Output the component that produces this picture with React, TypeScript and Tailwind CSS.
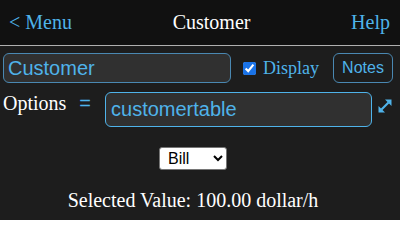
import { useState } from "react";

const serif = "font-['Liberation_Serif','Times_New_Roman',serif]";
const sans = "font-['Liberation_Sans',Arial,sans-serif]";

function ExpandIcon() {
	return (
		<svg className="h-[16px] w-[16px] text-[#4fb3ea]" viewBox="0 0 16 16">
			<path d="M4.5 11.5 L11.5 4.5" stroke="currentColor" strokeWidth="2.2" />
			<path d="M8 1.5 H14.5 V8 Z" fill="currentColor" />
			<path d="M1.5 8 V14.5 H8 Z" fill="currentColor" />
		</svg>
	);
}

export default function App() {
	const [name, setName] = useState("Customer");
	const [table, setTable] = useState("customertable");
	const [display, setDisplay] = useState(true);
	const [choice, setChoice] = useState("Bill");

	return (
		<div className={`h-[220px] w-[400px] overflow-hidden bg-[#1d1d1d] ${serif}`}>
			<header className="flex h-[46px] items-center justify-between border-b border-[#b0b0b0] bg-[#111111] px-[9px] pb-[2px] text-[20px]">
				<a className="text-[#4fb3ea]">&lt; Menu</a>
				<span className="text-white">Customer</span>
				<a className="pr-[1px] text-[#4fb3ea]">Help</a>
			</header>

			<div className="flex items-center px-[3px] pt-[7px]">
				<input
					className={`h-[30px] w-[228px] rounded-[6px] border border-[#4a88b2] bg-[#303030] pl-[4px] text-[20px] text-[#4fb3ea] outline-none ${sans}`}
					onChange={(e) => setName(e.target.value)}
					value={name}
				/>
				<label className="ml-[12px] flex items-center text-[18px] text-[#4fb3ea]">
					<input
						checked={display}
						className="h-[13px] w-[13px] accent-[#1a73e8]"
						onChange={() => setDisplay(!display)}
						type="checkbox"
					/>
					<span className="ml-[7px]">Display</span>
				</label>
				<button
					className={`ml-auto mr-[4px] h-[30px] w-[60px] rounded-[6px] border border-[#4a88b2] text-[16px] text-[#4fb3ea] ${sans}`}
					type="button"
				>
					Notes
				</button>
			</div>

			<div className="flex items-start px-[3px] pt-[9px]">
				<span className="leading-[23px] text-[20px] text-white">Options</span>
				<span className={`ml-[13px] leading-[23px] text-[20px] text-[#4fb3ea] ${sans}`}>=</span>
				<input
					className={`ml-[14px] h-[35px] w-[267px] rounded-[6px] border border-[#4fb3ea] bg-[#303030] pl-[5px] text-[20px] text-[#4fb3ea] outline-none ${sans}`}
					onChange={(e) => setTable(e.target.value)}
					value={table}
				/>
				<span className="ml-[5px] mt-[6px]">
					<ExpandIcon />
				</span>
			</div>

			<div className="flex justify-center pr-[14px] pt-[20px]">
				<select
					className={`h-[23px] w-[68px] rounded-[3px] border border-[#767676] bg-white pl-[4px] text-[16px] text-black ${sans}`}
					onChange={(e) => setChoice(e.target.value)}
					value={choice}
				>
					<option>Bill</option>
					<option>Fred</option>
					<option>Mary</option>
				</select>
			</div>

			<div className="flex justify-center pr-[14px] pt-[15px] text-[20px] text-white">
				Selected Value: 100.00 dollar/h
			</div>
		</div>
	);
}
